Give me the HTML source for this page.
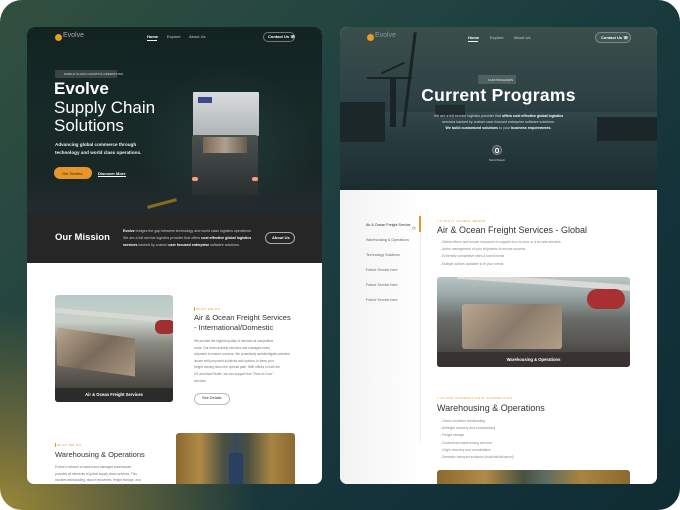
<!DOCTYPE html>
<html><head><meta charset="utf-8"><style>
*{margin:0;padding:0;box-sizing:border-box}
html,body{width:680px;height:510px;background:#fff;overflow:hidden;font-family:"Liberation Sans",sans-serif}
#bg{position:absolute;left:0;top:0;width:680px;height:510px;border-radius:22px;overflow:hidden;
background:radial-gradient(ellipse 260px 200px at 0 510px,#9a8838 0%,#6e6a3c 35%,rgba(40,70,60,0) 100%),linear-gradient(135deg,#31503f 0%,#1f4140 40%,#133239 75%,#0f2c33 100%)}
.a{position:absolute}
.card{position:absolute;top:27px;height:457px;border-radius:7px;overflow:hidden;background:#fff}
.t{position:absolute;white-space:nowrap}
</style></head><body>
<div id="bg">
<!-- LEFT CARD -->
<div class="card" style="left:27px;width:295px">
 <div class="a" style="left:0;top:0;width:295px;height:185px;background:radial-gradient(ellipse 90px 80px at 200px 120px,#24383a 0%,rgba(0,0,0,0) 100%),linear-gradient(180deg,#122322 0%,#172a28 50%,#1a2625 100%)"></div>
 <div class="a" style="left:0;top:150px;width:295px;height:35px;background:linear-gradient(180deg,rgba(30,40,45,0),#232b30)"></div>
 <div class="a" style="left:120px;top:175px;width:30px;height:3px;background:#8a6a20;transform:rotate(-15deg)"></div>
 <!-- truck -->
 <div class="a" style="left:166px;top:65px;width:66px;height:44px;background:linear-gradient(180deg,#d9dcdc,#aeb4b6);border-radius:1px"></div>
 <div class="a" style="left:171px;top:70px;width:14px;height:6px;background:#3a4a8a"></div>
 <div class="a" style="left:165px;top:108px;width:66px;height:60px;background:linear-gradient(180deg,#4a5250,#2a3030);border-radius:3px"></div>
 <div class="a" style="left:176px;top:110px;width:44px;height:16px;background:linear-gradient(90deg,#7a6650,#b0a090,#6a5a4a)"></div>
 <div class="a" style="left:165px;top:150px;width:6px;height:4px;background:#ff9a80;border-radius:2px"></div>
 <div class="a" style="left:225px;top:150px;width:6px;height:4px;background:#ff9a80;border-radius:2px"></div>
 <!-- nav -->
 <div class="a" style="left:28px;top:7px;width:7px;height:7px;border-radius:50%;background:#e89a2a"></div>
 <div class="t" style="left:36px;top:5px;font-size:7px;color:#aaa">Evolve</div>
 <div class="t" style="left:120px;top:7px;font-size:4px;color:#fff;font-weight:bold">Home</div>
 <div class="a" style="left:120px;top:13px;width:10px;height:1px;background:#fff"></div>
 <div class="t" style="left:140px;top:7px;font-size:4px;color:#ccc">Explore</div>
 <div class="t" style="left:162px;top:7px;font-size:4px;color:#ccc">About Us</div>
 <div class="a" style="left:236px;top:5px;width:32px;height:10px;border:1px solid #777;border-radius:6px"></div>
 <div class="t" style="left:241px;top:7px;font-size:4px;color:#fff;font-weight:bold">Contact Us ☏</div>
 <!-- hero text -->
 <div class="a" style="left:28px;top:43px;width:62px;height:8px;background:#3a4442;border-radius:1px"></div>
 <div class="t" style="left:37px;top:45px;font-size:3px;color:#ddd">WORLD CLASS LOGISTICS OPERATIONS</div>
 <div class="t" style="left:27px;top:52px;font-size:17px;line-height:19px;color:#fff;font-weight:bold">Evolve</div>
 <div class="t" style="left:27px;top:71px;font-size:17px;line-height:19px;color:#fff">Supply Chain</div>
 <div class="t" style="left:27px;top:89px;font-size:17px;line-height:19px;color:#fff">Solutions</div>
 <div class="t" style="left:28px;top:114px;font-size:4.6px;line-height:7.5px;color:#eee;font-weight:bold">Advancing global commerce through<br>technology and world class operations.</div>
 <div class="a" style="left:27px;top:140px;width:38px;height:12px;background:#e8962a;border-radius:6px"></div>
 <div class="t" style="left:35px;top:144px;font-size:4px;color:#3a2a10">Get Started</div>
 <div class="t" style="left:71px;top:144px;font-size:4px;color:#fff;font-weight:bold;border-bottom:1px solid #fff">Discover More</div>
 <!-- mission -->
 <div class="a" style="left:0;top:185px;width:295px;height:51px;background:#262626"></div>
 <div class="t" style="left:28px;top:205px;font-size:9.5px;color:#fff;font-weight:bold">Our Mission</div>
 <div class="t" style="left:96px;top:201px;font-size:3.6px;line-height:7px;color:#ccc"><b style="color:#fff">Evolve</b> bridges the gap between technology and world class logistics operations.<br>We are a full service logistics provider that offers <b style="color:#fff">cost effective global logistics</b><br><b style="color:#fff">services</b> backed by custom <b style="color:#fff">user focused enterprise</b> software solutions.</div>
 <div class="a" style="left:238px;top:205px;width:30px;height:12px;border:1px solid #aaa;border-radius:6px"></div>
 <div class="t" style="left:245px;top:208px;font-size:4px;color:#fff;font-weight:bold">About Us</div>
 <!-- section 1 -->
 <div class="a" style="left:28px;top:268px;width:118px;height:107px;border-radius:3px;overflow:hidden;background:linear-gradient(180deg,#b8cac8 0%,#c8d0c8 25%,#8a8a80 45%,#5a5650 75%,#3a3634 100%)">
  <div class="a" style="left:0;top:18px;width:118px;height:5px;background:#d8d8d4;transform:rotate(5deg)"></div>
  <div class="a" style="left:100px;top:25px;width:20px;height:14px;background:#a03030;border-radius:6px"></div>
  <div class="a" style="left:2px;top:38px;width:78px;height:38px;background:linear-gradient(135deg,#b8a890,#7a6a5a,#a89880);transform:skewY(8deg)"></div>
  <div class="a" style="left:0;top:93px;width:118px;height:14px;background:rgba(40,40,40,.85)"></div>
  <div class="t" style="left:0;width:118px;text-align:center;top:97px;font-size:4.2px;color:#fff;font-weight:bold">Air &amp; Ocean Freight Services</div>
 </div>
 <div class="a" style="left:167px;top:280px;width:1px;height:4px;background:#e8962a"></div>
 <div class="t" style="left:169px;top:280px;font-size:3px;color:#e8962a;letter-spacing:.5px">WHAT WE DO</div>
 <div class="t" style="left:167px;top:286px;font-size:7.5px;line-height:10px;color:#333">Air &amp; Ocean Freight Services<br>- International/Domestic</div>
 <div class="t" style="left:167px;top:311px;font-size:3.2px;line-height:6.6px;color:#777">We provide the highest quality of services at competitive<br>costs. Our team actively monitors and manages every<br>shipment to ensure success. We proactively avoid/mitigate potential<br>issues with proposed solutions and options, to keep your<br>freight moving down the optimal path. With offices in both the<br>US and Asia Pacific, we can support true "Door-to-Door"<br>services.</div>
 <div class="a" style="left:167px;top:366px;width:36px;height:12px;border:1px solid #bbb;border-radius:6px"></div>
 <div class="t" style="left:175px;top:369px;font-size:3.8px;color:#333">See Details</div>
 <!-- section 2 -->
 <div class="a" style="left:28px;top:416px;width:1px;height:4px;background:#e8962a"></div>
 <div class="t" style="left:30px;top:416px;font-size:3px;color:#e8962a;letter-spacing:.5px">WHAT WE DO</div>
 <div class="t" style="left:28px;top:423px;font-size:7.5px;color:#333">Warehousing &amp; Operations</div>
 <div class="t" style="left:28px;top:437px;font-size:3.2px;line-height:6.6px;color:#777">Evolve's network of owned and managed warehouses<br>provides all elements of global supply chain services. This<br>includes transloading, airport recoveries, freight storage, and</div>
 <div class="a" style="left:149px;top:406px;width:119px;height:51px;border-radius:3px 3px 0 0;background:linear-gradient(90deg,#8a6a30 0%,#b08a48 20%,#4a5040 40%,#3a4a5a 50%,#4a5040 60%,#a88442 80%,#8a6a30 100%)">
  <div class="a" style="left:53px;top:20px;width:14px;height:31px;background:#2a4060"></div>
 </div>
</div>

<!-- RIGHT CARD -->
<div class="card" style="left:340px;width:317px">
 <div class="a" style="left:0;top:0;width:317px;height:163px;background:linear-gradient(180deg,#3a4e4a 0%,#2f4346 40%,#27393d 60%,#2a4044 75%,#1c2c30 100%)"></div>
 <div class="a" style="left:0;top:85px;width:317px;height:78px;background:linear-gradient(180deg,#32474a 0%,#263a3e 40%,#1c2c30 100%)"></div>
 <!-- crane -->
 <div class="a" style="left:68px;top:5px;width:3px;height:95px;background:#1a2426;transform:rotate(7deg)"></div>
 <div class="a" style="left:27px;top:50px;width:45px;height:2px;background:#1a2426"></div>
 <div class="a" style="left:40px;top:40px;width:26px;height:2px;background:#1a2426;transform:rotate(-25deg)"></div>
 <div class="a" style="left:50px;top:50px;width:6px;height:50px;background:#1a2426"></div>
 <div class="a" style="left:0;top:75px;width:45px;height:40px;background:#1c2729"></div>
 <div class="a" style="left:257px;top:90px;width:60px;height:24px;background:#1c2628"></div>
 <div class="a" style="left:95px;top:78px;width:30px;height:12px;background:#202c2e"></div>
 <!-- nav -->
 <div class="a" style="left:27px;top:7px;width:7px;height:7px;border-radius:50%;background:#e89a2a"></div>
 <div class="t" style="left:35px;top:5px;font-size:7px;color:#8a9a98"> Evolve</div>
 <div class="t" style="left:128px;top:8px;font-size:4px;color:#fff;font-weight:bold">Home</div>
 <div class="a" style="left:128px;top:14px;width:10px;height:1px;background:#fff"></div>
 <div class="t" style="left:150px;top:8px;font-size:4px;color:#ccc">Explore</div>
 <div class="t" style="left:174px;top:8px;font-size:4px;color:#ccc">About Us</div>
 <div class="a" style="left:255px;top:5px;width:36px;height:11px;border:1px solid #7a8a8a;border-radius:6px;background:rgba(255,255,255,.06)"></div>
 <div class="t" style="left:261px;top:8px;font-size:4px;color:#fff;font-weight:bold">Contact Us ☏</div>
 <!-- hero -->
 <div class="a" style="left:138px;top:48px;width:38px;height:9px;background:rgba(255,255,255,.15);border-radius:1px"></div>
 <div class="t" style="left:148px;top:50.5px;font-size:3px;color:#eee">OUR PROGRAMS</div>
 <div class="t" style="left:0;width:317px;text-align:center;top:58px;font-size:17.5px;color:#fff;font-weight:bold;letter-spacing:.3px">Current Programs</div>
 <div class="t" style="left:0;width:317px;text-align:center;top:86px;font-size:3.6px;line-height:6px;color:#ddd">We are a full service logistics provider that <b style="color:#fff">offers cost effective global logistics</b><br>services backed by custom user-focused enterprise software solutions.<br><b style="color:#fff">We build customized solutions</b> to your <b style="color:#fff">business requirements</b>.</div>
 <div class="a" style="left:152px;top:118px;width:10px;height:10px;border-radius:50%;background:rgba(255,255,255,.15);border:1px solid #889"></div>
 <div class="a" style="left:155px;top:121px;width:4px;height:5px;border:1px solid #fff;border-radius:2px"></div>
 <div class="t" style="left:0;width:314px;text-align:center;top:131px;font-size:3px;color:#ddd">Scroll Down</div>
 <!-- sidebar -->
 <div class="a" style="left:0;top:163px;width:80px;height:294px;background:linear-gradient(90deg,#f2f2f2,#fff)"></div>
 <div class="a" style="left:80px;top:185px;width:1px;height:230px;background:#eee"></div>
 <div class="a" style="left:79px;top:189px;width:2px;height:16px;background:#e8962a"></div>
 <div class="t" style="left:26px;top:196px;font-size:3.6px;color:#333">Air &amp; Ocean Freight Service</div>
 <div class="t" style="left:72px;top:199px;font-size:5px;color:#888">⟳</div>
 <div class="t" style="left:26px;top:211px;font-size:3.6px;color:#666">Warehousing &amp; Operations</div>
 <div class="t" style="left:26px;top:226px;font-size:3.6px;color:#666">Technology Solutions</div>
 <div class="t" style="left:26px;top:241px;font-size:3.6px;color:#666">Future Service here</div>
 <div class="t" style="left:26px;top:256px;font-size:3.6px;color:#666">Future Service here</div>
 <div class="t" style="left:26px;top:271px;font-size:3.6px;color:#666">Future Service here</div>
 <!-- content 1 -->
 <div class="t" style="left:97px;top:192px;font-size:3px;color:#e8962a;letter-spacing:.5px">| A TRULY GLOBAL REACH</div>
 <div class="t" style="left:97px;top:198px;font-size:9px;color:#333">Air &amp; Ocean Freight Services - Global</div>
 <div class="t" style="left:100px;top:212px;font-size:3.3px;line-height:7.2px;color:#888">- Global offices and human resources to support door-to-door or a la carte services<br>- Active management of your shipments to ensure success<br>- Extremely competitive rates &amp; transit times<br>- Multiple options available to fit your needs</div>
 <div class="a" style="left:97px;top:250px;width:193px;height:90px;border-radius:3px;overflow:hidden;background:linear-gradient(180deg,#b8c6c4 0%,#9aa8a8 20%,#6a6e6a 45%,#55534f 75%,#3a3836 100%)">
  <div class="a" style="left:20px;top:2px;width:180px;height:6px;background:#dadad6;transform:rotate(4deg)"></div>
  <div class="a" style="left:150px;top:12px;width:38px;height:20px;background:#a83030;border-radius:10px"></div>
  <div class="a" style="left:25px;top:27px;width:100px;height:45px;background:linear-gradient(135deg,#b8a890,#8a7a6a,#b0a088);border-radius:3px"></div>
  <div class="a" style="left:0;top:75px;width:193px;height:15px;background:rgba(55,50,48,.92)"></div>
  <div class="t" style="left:0;width:193px;text-align:center;top:80px;font-size:4.2px;color:#fff;font-weight:bold">Warehousing &amp; Operations</div>
 </div>
 <!-- content 2 -->
 <div class="t" style="left:97px;top:369px;font-size:3px;color:#e8962a;letter-spacing:.5px">| US AND INTERNATIONAL CAPABILITIES</div>
 <div class="t" style="left:97px;top:376px;font-size:9px;color:#333">Warehousing &amp; Operations</div>
 <div class="t" style="left:100px;top:391px;font-size:3.3px;line-height:7.2px;color:#888">- Ocean container transloading<br>- Airfreight recovery and crossdocking<br>- Freight storage<br>- Customized warehousing services<br>- Origin recovery and consolidation<br>- Domestic transport solutions (truck/rail/air/parcel)</div>
 <div class="a" style="left:97px;top:443px;width:193px;height:14px;border-radius:3px 3px 0 0;background:linear-gradient(90deg,#8a6a30,#b08a48 25%,#4a5040 45%,#5a6a60 55%,#a88442 75%,#8a6a30)"></div>
</div>
</div>
</body></html>
